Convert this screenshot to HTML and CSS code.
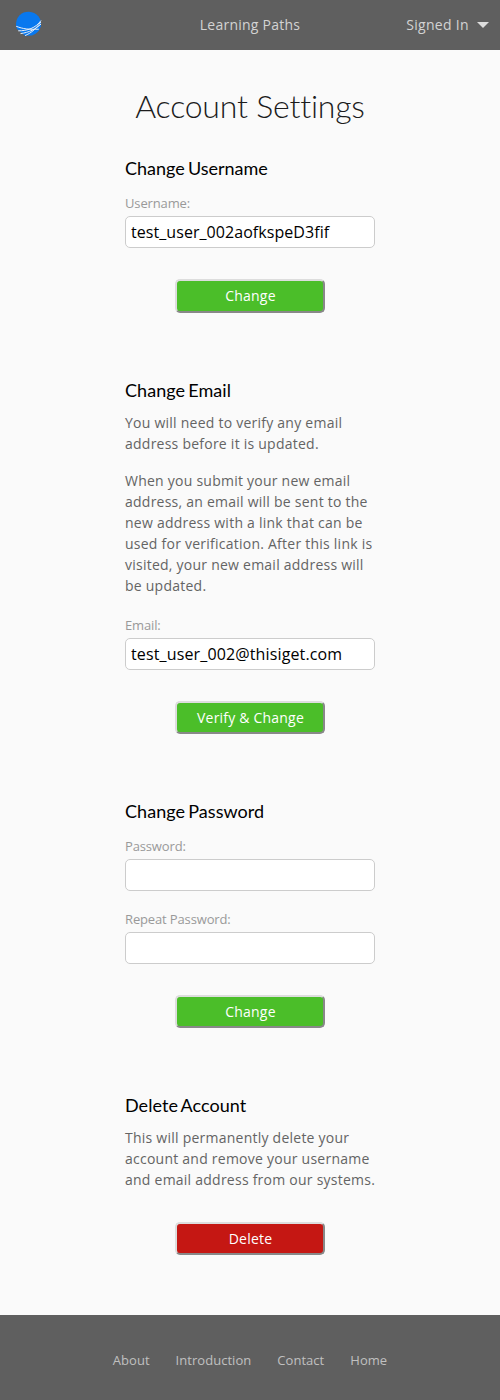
FILE: index.html
```html
<!DOCTYPE html>
<html lang="en"><head><meta charset="utf-8"><title>Account Settings</title><link rel="stylesheet" href="styles.css"></head>
<body>
<header class="nav">
<a class="logo" href="#" aria-label="Home"><svg width="28" height="28" viewBox="0 0 28 28"><path d="M1.1 15.5A12.5 12.5 0 1 1 25.8 16.5Q24 23 17 25.5L10 25.8L2 19Z" fill="#0878ef"/><path d="M1.2 16.3C8 19 14 19.6 23.8 19.2M3.2 20.8C12 21 21 18 26 10.5M5.5 23.6C14 22.5 21 19 26 14M10 25.6C16 23 20 20 25.8 12" fill="none" stroke="#e8eef5" stroke-width="1"/></svg></a>
<a class="paths" href="#">Learning Paths</a>
<a class="signed" href="#">Signed In<span class="caret"></span></a>
</header>
<main class="content">
<h1>Account Settings</h1>
<form class="section username">
<h2>Change Username</h2>
<label for="u">Username:</label><input id="u" type="text" value="test_user_002aofkspeD3fif">
<button type="button">Change</button>
</form>
<form class="section email">
<h2>Change Email</h2>
<p>You will need to verify any email address before it is updated.</p>
<p>When you submit your new email address, an email will be sent to the new address with a link that can be used for verification. After this link is visited, your new email address will be updated.</p>
<label for="e">Email:</label><input id="e" type="text" value="test_user_002@thisiget.com">
<button type="button">Verify &amp; Change</button>
</form>
<form class="section password">
<h2>Change Password</h2>
<label for="p">Password:</label><input id="p" type="password">
<label for="r">Repeat Password:</label><input id="r" type="password">
<button type="button">Change</button>
</form>
<form class="section delete">
<h2>Delete Account</h2>
<p>This will permanently delete your account and remove your username and email address from our systems.</p>
<button type="button" class="danger">Delete</button>
</form>
</main>
<footer class="footer"><a href="#">About</a><a href="#">Introduction</a><a href="#">Contact</a><a href="#">Home</a></footer>
</body></html>
```
FILE: styles.css
```css
* { box-sizing: border-box; }
body { margin: 0; min-height: 1400px; display: flex; flex-direction: column; background: #fafafa; color: #646464; font: 14px/21px "Open Sans", sans-serif; letter-spacing: .24px; }
a { color: inherit; text-decoration: none; }
.nav { height: 50px; padding: 0 11px 2px 15px; display: grid; grid-template-columns: 1fr auto 1fr; align-items: center; background: #5f5f5f; color: #d3d3d3; }
.logo { height: 28px; }
.paths { margin-left: -4px; }
.signed { display: flex; align-items: center; justify-content: flex-end; gap: 8px; letter-spacing: .32px; }
.caret { margin-top: 2px; border: 6px solid transparent; border-top-color: #ddd; border-bottom: 0; }
.content { width: 250px; margin: 0 auto; flex: 1; }
h1 { margin: 34px 0 0; height: 44px; font: 300 32px/44px Lato, sans-serif; letter-spacing: -.2px; color: #1c1c1c; text-align: center; white-space: nowrap; }
h2 { margin: 0; font: 400 18px/22px Lato, sans-serif; letter-spacing: .05px; word-spacing: -1.5px; color: #000; }
.section { display: flex; flex-direction: column; }
.username { padding-top: 29px; height: 251px; }
.username h2 { letter-spacing: 0; }
.email { height: 421px; }
.password { height: 294px; }
p { margin: 11px 0 6px; }
p + p { margin-top: 10px; }
p + label { margin-top: 13px; }
.delete p { margin-right: -4px; }
label { margin-top: 14px; font-size: 13px; line-height: 20px; letter-spacing: -.14px; color: #999; }
input { margin: 3px 0 8px; width: 250px; height: 32px; padding: 1px 5px; border: 1px solid #ccc; border-radius: 5px; background: #fff; color: #000; font: 16px "Open Sans", sans-serif; letter-spacing: .06px; }
.email input { letter-spacing: .14px; }
input + label { margin-top: 10px; }
button { margin: 23px auto 0; width: 150px; height: 33px; padding: 0 0 1px 1px; border: 2px solid; border-color: #ddd #888 #888 #ddd; border-radius: 5px; background: #4bbe29; color: #fff; font: 14px "Open Sans", sans-serif; letter-spacing: .2px; }
.username button { height: 34px; }
.delete button { margin-top: 26px; }
.danger { background: #c51713; }
.footer { height: 85px; padding-top: 5px; display: flex; justify-content: center; align-items: center; gap: 26px; background: #5f5f5f; color: #c0c0c0; font-size: 13px; letter-spacing: .04px; }
```
